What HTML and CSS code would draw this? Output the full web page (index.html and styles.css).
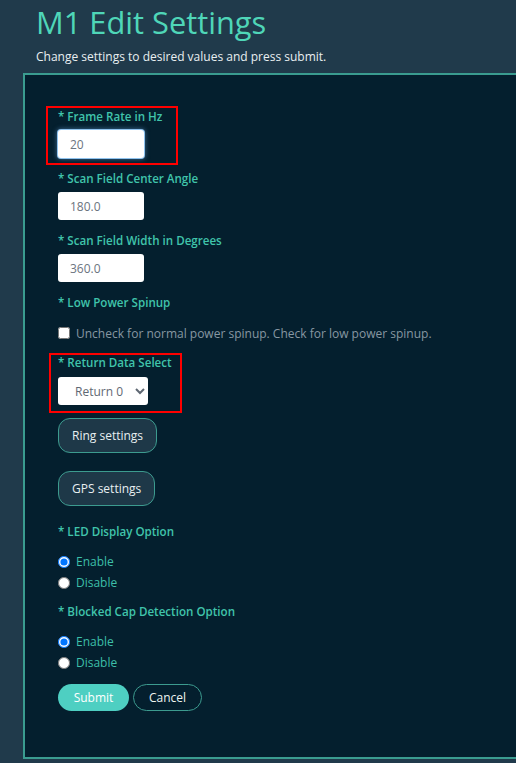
FILE: index.html
```html
<!DOCTYPE html>
<html lang="en">
<head>
<meta charset="utf-8">
<title>M1 Edit Settings</title>
<link rel="stylesheet" href="styles.css">
</head>
<body>
<header class="page-head">
  <h1 class="title">M1 Edit Settings</h1>
  <p class="subtitle">Change settings to desired values and press submit.</p>
</header>
<form class="panel">
  <div class="field hl hl-one">
    <label class="field-label">* Frame Rate in Hz</label>
    <input class="text-input focused" type="text" value="20">
  </div>
  <div class="field">
    <label class="field-label">* Scan Field Center Angle</label>
    <input class="text-input" type="text" value="180.0">
  </div>
  <div class="field">
    <label class="field-label">* Scan Field Width in Degrees</label>
    <input class="text-input" type="text" value="360.0">
  </div>
  <div class="field field-check">
    <label class="field-label">* Low Power Spinup</label>
    <label class="check-row"><input class="check" type="checkbox"><span>Uncheck for normal power spinup. Check for low power spinup.</span></label>
  </div>
  <div class="field field-select hl hl-two">
    <label class="field-label">* Return Data Select</label>
    <select class="select"><option>Return 0</option><option>Return 1</option></select>
  </div>
  <div class="btn-row first"><button type="button" class="btn-ghost">Ring settings</button></div>
  <div class="btn-row second"><button type="button" class="btn-ghost">GPS settings</button></div>
  <div class="field field-radio">
    <label class="field-label">* LED Display Option</label>
    <label class="radio-row"><input class="radio" type="radio" name="led" checked><span>Enable</span></label>
    <label class="radio-row"><input class="radio" type="radio" name="led"><span>Disable</span></label>
  </div>
  <div class="field field-radio last">
    <label class="field-label">* Blocked Cap Detection Option</label>
    <label class="radio-row"><input class="radio" type="radio" name="cap" checked><span>Enable</span></label>
    <label class="radio-row"><input class="radio" type="radio" name="cap"><span>Disable</span></label>
  </div>
  <div class="actions">
    <button type="button" class="btn-submit">Submit</button>
    <button type="button" class="btn-cancel">Cancel</button>
  </div>
</form>
</body>
</html>
```
FILE: styles.css
```css
html, body {
  margin: 0;
  padding: 0;
}
body {
  background: #203a4b;
  font-family: "Open Sans", "Noto Sans", sans-serif;
  overflow: hidden;
  width: 516px;
  height: 763px;
}
.page-head {
  padding-left: 36px;
}
.title {
  margin: 3px 0 0 0;
  font-size: 30.8px;
  line-height: 38px;
  font-weight: 400;
  color: #4fd6b8;
}
.subtitle {
  margin: 7px 0 7px 0;
  font-size: 12px;
  line-height: 18px;
  color: #e9eff1;
}
.panel {
  margin-left: 23px;
  width: 520px;
  box-sizing: border-box;
  border: 2px solid #3a9c90;
  background: #041f2e;
  padding: 33px 0 46px 33px;
}
.field {
  margin-bottom: 12px;
  position: relative;
}
.field-label {
  display: block;
  font-size: 11.6px;
  line-height: 18px;
  font-weight: 600;
  color: #40c4ab;
  margin-bottom: 4px;
}
.field:first-child .field-label {
  margin-bottom: 4px;
}
.text-input {
  display: block;
  box-sizing: border-box;
  width: 86px;
  height: 28px;
  border: none;
  border-radius: 3px;
  background: #fff;
  padding: 0 12px;
  font-family: inherit;
  font-size: 12px;
  color: #6b7480;
  outline: none;
}
.text-input.focused {
  box-shadow: 0 0 0 1px #8fc3ee, 0 0 5px 1px rgba(110, 170, 230, 0.55);
}
.field-check .field-label {
  margin-bottom: 12px;
}
.field-check {
  margin-bottom: 12px;
}
.check-row {
  display: flex;
  align-items: center;
  gap: 6px;
  height: 18px;
  font-size: 12px;
  color: #8797a2;
}
.check {
  margin: 0;
  width: 12px;
  height: 12px;
}
.field-select {
  margin-bottom: 13px;
}
.field-select .field-label {
  margin-bottom: 5px;
}
.select {
  display: block;
  box-sizing: border-box;
  width: 90px;
  height: 28px;
  border: none;
  border-radius: 3px;
  background: #fff;
  padding: 0 4px 0 13px;
  font-family: inherit;
  font-size: 12px;
  color: #5f6873;
}
.btn-row.first {
  margin-bottom: 18px;
}
.btn-row.second {
  margin-bottom: 17px;
}
.btn-ghost {
  box-sizing: border-box;
  height: 35px;
  padding: 0 13px;
  border: 1px solid #3c9b8f;
  border-radius: 12px;
  background: #1e3848;
  color: #e8eff1;
  font-family: inherit;
  font-size: 12px;
  font-weight: 500;
}
.field-radio .field-label {
  margin-bottom: 10px;
}
.field-radio {
  margin-bottom: 10px;
}
.field-radio.last {
  margin-bottom: 11px;
}
.radio-row {
  display: flex;
  align-items: center;
  gap: 6px;
  height: 21px;
  font-size: 12px;
  color: #3dbfa9;
}
.radio {
  margin: 0;
  width: 12px;
  height: 12px;
}
.actions {
  display: flex;
  gap: 4px;
}
.btn-submit {
  box-sizing: border-box;
  height: 27px;
  width: 71px;
  border: none;
  border-radius: 14px;
  background: #4ecfc2;
  color: #ffffff;
  font-family: inherit;
  font-size: 12px;
}
.btn-cancel {
  box-sizing: border-box;
  height: 27px;
  width: 69px;
  border: 1px solid #3c9b8f;
  border-radius: 14px;
  background: transparent;
  color: #eef4f0;
  font-family: inherit;
  font-size: 12px;
}
.hl::after {
  content: "";
  position: absolute;
  border: 2px solid #ff0000;
  box-sizing: border-box;
  pointer-events: none;
}
.hl-one::after {
  left: -12px;
  top: -2px;
  width: 132px;
  height: 59px;
}
.hl-two::after {
  left: -9px;
  top: -1px;
  width: 133px;
  height: 60px;
}
```
